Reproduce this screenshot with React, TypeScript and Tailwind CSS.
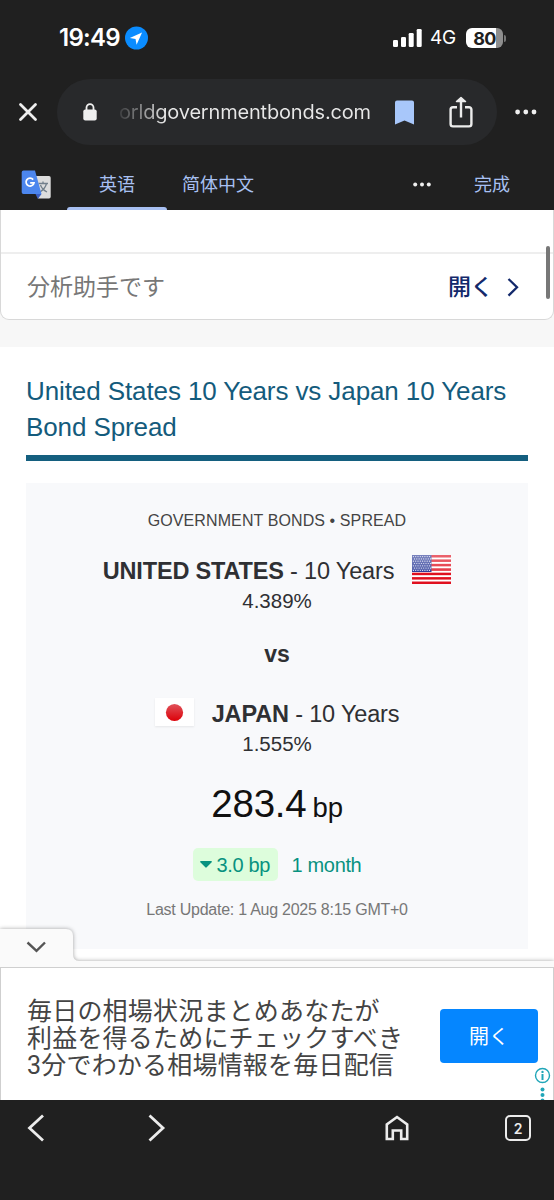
import React from "react";

const stripes = [0, 1, 2, 3, 4, 5, 6];
const starRows = [0, 1, 2, 3, 4, 5, 6];
const starCols = [0, 1, 2, 3, 4, 5, 6, 7];

const UsFlag = () => (
  <svg className="w-[39px] h-[29px] shrink-0" viewBox="0 0 39 29">
    <defs>
      <linearGradient id="usShine" x1="0" y1="0" x2="0" y2="1">
        <stop offset="0" stopColor="#fff" stopOpacity="0.35" />
        <stop offset="0.5" stopColor="#fff" stopOpacity="0.2" />
        <stop offset="0.55" stopColor="#fff" stopOpacity="0" />
      </linearGradient>
    </defs>
    <rect width="39" height="29" fill="#fff" />
    {stripes.map((i) => (
      <rect key={i} y={i * 4.42} width="39" height="2.5" fill="#e0101f" />
    ))}
    <rect width="19.5" height="17" fill="#2f3f9a" />
    {starRows.map((r) =>
      starCols.map((c) => (
        <circle
          key={`${r}-${c}`}
          cx={1.4 + c * 2.3 + (r % 2) * 1.1}
          cy={1.6 + r * 2.3}
          r="0.6"
          fill="#dfe2f3"
        />
      ))
    )}
    <rect width="39" height="29" fill="url(#usShine)" />
  </svg>
);

const JapanFlag = () => (
  <svg
    className="w-[39px] h-[28px] shrink-0 shadow-[0_1px_2px_rgba(0,0,0,0.08)]"
    viewBox="0 0 39 28"
  >
    <defs>
      <linearGradient id="jpSun" x1="0" y1="0" x2="0" y2="1">
        <stop offset="0" stopColor="#e0525a" />
        <stop offset="1" stopColor="#dc0008" />
      </linearGradient>
    </defs>
    <rect width="39" height="28" fill="#fff" />
    <circle cx="19.5" cy="14.5" r="8.6" fill="url(#jpSun)" />
  </svg>
);

const StatusBar = () => (
  <div className="flex h-[76px] items-center pl-[59px] pr-[48px] text-white">
    <span className="w-[63px] whitespace-nowrap text-[24px] font-semibold tracking-[-0.7px]">
      19:49
    </span>
    <svg className="ml-[3px] w-[23px] h-[24px]" viewBox="0 0 24 24">
      <circle cx="12" cy="12" r="12" fill="#0a8cff" />
      <path d="M17.8 6.2 5 11.9l6 1.1 1.1 6z" fill="#fff" />
    </svg>
    <div className="ml-auto flex items-center">
      <svg className="w-[29px] h-[18px]" viewBox="0 0 29 18" fill="#fff">
        <rect x="0" y="11" width="5" height="7" rx="1.3" />
        <rect x="8" y="8" width="5" height="10" rx="1.3" />
        <rect x="15.7" y="4" width="5" height="14" rx="1.3" />
        <rect x="23.7" y="0" width="5" height="18" rx="1.3" />
      </svg>
      <span className="ml-[8px] w-[30px] whitespace-nowrap text-[19px] tracking-[-0.3px]">
        4G
      </span>
      <div className="ml-[6px] flex h-[20px] w-[37px] items-center justify-center rounded-[6px] bg-linear-to-r from-white from-80% to-[#8e8e8e] to-80% text-[18px] font-bold tracking-[-0.6px] text-[#202020]">
        80
      </div>
      <div className="ml-px h-[7px] w-[2px] rounded-r-full bg-[#777777]"></div>
    </div>
  </div>
);

const AddressBar = () => (
  <div className="flex h-[72px] items-center">
    <svg
      className="ml-[18px] w-[20px] h-[20px]"
      viewBox="0 0 20 20"
      fill="none"
      stroke="#efefef"
      strokeWidth="2.8"
      strokeLinecap="round"
    >
      <path d="M2.5 2.5l15 15M17.5 2.5l-15 15" />
    </svg>
    <div className="ml-[19px] flex h-[66px] w-[440px] items-center rounded-full bg-[#28292b]">
      <svg className="ml-[26px] w-[14px] h-[18px]" viewBox="0 0 14 18">
        <rect x="0.3" y="6.5" width="13.4" height="11" rx="2" fill="#efefef" />
        <path
          d="M3.5 8V4.6a3.5 3.5 0 0 1 7 0V8"
          fill="none"
          stroke="#efefef"
          strokeWidth="1.8"
        />
      </svg>
      <span className="ml-[22px] w-[252px] whitespace-nowrap bg-linear-to-r from-[#3c3d3f] to-[#e8e8e8] to-[46px] bg-clip-text text-[20px] leading-[30px] tracking-[-0.18px] text-transparent">
        orldgovernmentbonds.com
      </span>
      <svg className="ml-[24px] w-[19px] h-[25px]" viewBox="0 0 19 25">
        <path
          d="M2 .5h15a2 2 0 0 1 2 2V24.5l-9.5-4-9.5 4V2.5a2 2 0 0 1 2-2z"
          fill="#a8c7fa"
        />
      </svg>
      <svg
        className="ml-[35px] w-[24px] h-[32px]"
        viewBox="0 0 24 32"
        fill="none"
        stroke="#ececec"
        strokeWidth="2.4"
      >
        <path d="M8 11.2H4a2.4 2.4 0 0 0-2.4 2.4V28A2.4 2.4 0 0 0 4 30.4h16a2.4 2.4 0 0 0 2.4-2.4V13.6a2.4 2.4 0 0 0-2.4-2.4h-4M12 21.5V4" />
        <path
          d="M7.5 5.5L12 1.5l4.5 4z"
          fill="#ececec"
          strokeWidth="1.5"
          strokeLinejoin="round"
        />
      </svg>
    </div>
    <svg className="ml-[18px] w-[22px] h-[6px]" viewBox="0 0 22 6" fill="#efefef">
      <circle cx="2.6" cy="3" r="2.4" />
      <circle cx="10.8" cy="3" r="2.4" />
      <circle cx="19" cy="3" r="2.4" />
    </svg>
  </div>
);

const TranslateBar = () => (
  <div className="flex h-[62px] items-center text-[18px] text-[#a8c0f2]">
    <svg className="ml-[21px] mt-[11px] w-[30px] h-[30px]" viewBox="0 0 30 30">
      <path
        d="M14 6h14a1.7 1.7 0 0 1 1.7 1.7v19a1.7 1.7 0 0 1-1.7 1.7H17z"
        fill="#dddddd"
      />
      <path
        d="M17.5 13.5h9.5M22 11.5v2M25.5 13.5c-.8 3.5-3.5 6.5-6.5 8.5M19.5 15c1 3 3.5 5.5 6.5 7"
        fill="none"
        stroke="#73808c"
        strokeWidth="1.3"
      />
      <path d="M14.5 24h6l-3.6 5z" fill="#3a5fc4" />
      <path
        d="M2.5.5h11.5l6.5 23.5h-18A1.8 1.8 0 0 1 .7 22.2v-20A1.8 1.8 0 0 1 2.5.5z"
        fill="#4c86ee"
      />
      <path
        d="M12.2 9.6a4 4 0 1 0 .8 3.2H9.2"
        fill="none"
        stroke="#fff"
        strokeWidth="1.7"
      />
    </svg>
    <div className="ml-[16px] flex h-full w-[100px] flex-col items-center">
      <span className="mt-[14px] h-[45px] leading-[46px]">英语</span>
      <div className="h-[3px] w-full shrink-0 rounded-t-[3px] bg-[#a8c0f2]"></div>
    </div>
    <span className="ml-[15px] mt-[11px]">简体中文</span>
    <svg
      className="ml-auto mt-[11px] w-[18px] h-[5px]"
      viewBox="0 0 18 5"
      fill="#efefef"
    >
      <circle cx="2.2" cy="2.5" r="2" />
      <circle cx="9" cy="2.5" r="2" />
      <circle cx="15.8" cy="2.5" r="2" />
    </svg>
    <span className="ml-[43px] mr-[44px] mt-[11px]">完成</span>
  </div>
);

const TopAd = () => (
  <div className="relative h-[137px] bg-[#f7f7f7]">
    <div className="h-[110px] rounded-b-[9px] border border-t-0 border-[#d8d8d8] bg-white">
      <div className="h-[44px] border-b-2 border-[#eeeeee]"></div>
      <div className="flex h-[65px] items-center pl-[26px] pr-[34px] pt-[2px]">
        <span className="text-[23px] text-[#777777]">分析助手です</span>
        <span className="ml-auto text-[23px] font-medium tracking-[-0.5px] text-[#13296b]">
          開く
        </span>
        <svg
          className="ml-[14px] w-[12px] h-[20px]"
          viewBox="0 0 12 20"
          fill="none"
          stroke="#13296b"
          strokeWidth="2.3"
        >
          <path d="M1.5 1l8.5 8.300-8.500 8.300" />
        </svg>
      </div>
    </div>
    <div className="absolute right-[4px] top-[36px] h-[53px] w-[4px] rounded-full bg-[#777777]"></div>
  </div>
);

const SpreadCard = () => (
  <div className="mt-[22px] flex h-[466px] flex-col items-center bg-[#f8f9fb] pt-[26px] text-[#2f3033]">
    <p className="h-[24px] whitespace-nowrap text-[16px] leading-[24px] tracking-[0.1px] text-[#444444]">
      GOVERNMENT BONDS • SPREAD
    </p>
    <div className="mt-[20px] flex h-[32px] items-center">
      <p className="whitespace-nowrap pt-[3px] text-[23.5px] leading-[32px] tracking-[-0.17px]">
        <b>UNITED STATES</b> - 10 Years
      </p>
      <div className="ml-[18px]">
        <UsFlag />
      </div>
    </div>
    <p className="mt-px h-[30px] text-[20.5px] leading-[30px]">4.389%</p>
    <p className="mt-[22px] h-[32px] text-[23px] font-bold leading-[32px]">vs</p>
    <div className="mt-[26px] flex h-[32px] items-center">
      <JapanFlag />
      <p className="ml-[18px] whitespace-nowrap pt-[3px] text-[23.5px] leading-[32px] tracking-[-0.17px]">
        <b>JAPAN</b> - 10 Years
      </p>
    </div>
    <p className="mt-px h-[30px] text-[20.5px] leading-[30px]">1.555%</p>
    <p className="mt-[20px] flex h-[50px] items-baseline whitespace-nowrap text-[38.5px] leading-[50px] tracking-[-0.2px] text-[#111111]">
      283.4
      <span className="ml-[6px] text-[27.5px]">bp</span>
    </p>
    <div className="mt-[19px] flex h-[33px] items-center text-[20px] tracking-[-0.35px] text-[#089280]">
      <div className="flex h-[33px] w-[85px] items-center rounded-[5px] bg-[#ddfddc] pl-[7px]">
        <svg className="w-[12px] h-[7px]" viewBox="0 0 12 7" fill="#089280">
          <path d="M.8 0h10.4a.7.7 0 0 1 .5 1.2L6.7 6.3a1 1 0 0 1-1.4 0L.3 1.2A.7.7 0 0 1 .8 0z" />
        </svg>
        <span className="ml-[5px] whitespace-nowrap">3.0 bp</span>
      </div>
      <span className="ml-[14px] whitespace-nowrap">1 month</span>
    </div>
    <p className="mt-[17px] whitespace-nowrap text-[16px] leading-[24px] tracking-[-0.25px] text-[#777777]">
      Last Update: 1 Aug 2025 8:15 GMT+0
    </p>
  </div>
);

const BottomAd = () => (
  <div className="absolute inset-x-0 bottom-0 h-[172px]">
    <svg
      className="block h-[39px] w-[554px] drop-shadow-[0_0_2px_rgba(0,0,0,0.35)]"
      viewBox="0 0 554 39"
    >
      <path d="M0 1h66q7 0 7 7v18q0 7 6 7h475v6H0z" fill="#fafafa" />
      <path
        d="M27.5 14.5l9 8.3 8.5-8.3"
        fill="none"
        stroke="#555555"
        strokeWidth="2.4"
      />
    </svg>
    <div className="relative flex h-[133px] border border-b-0 border-[#cfcfcf] bg-white">
      <p className="ml-[26px] mt-[30px] whitespace-nowrap font-['Roboto','Noto_Sans_CJK_JP',sans-serif] text-[25px] leading-[27px] tracking-[0.2px] text-[#444444]">
        毎日の相場状況まとめあなたが
        <br />
        利益を得るためにチェックすべき
        <br />
        3分でわかる相場情報を毎日配信
      </p>
      <button className="ml-auto mr-[15px] mt-[41px] flex h-[54px] w-[98px] items-center justify-center rounded-[4px] bg-[#0586ff] pt-[2px] text-[20px] text-white">
        開く
      </button>
      <svg
        className="absolute right-[2px] top-[99px] w-[17px] h-[33px]"
        viewBox="0 0 17 33"
      >
        <circle cx="8.5" cy="8.5" r="7" fill="none" stroke="#20a6b8" strokeWidth="1.4" />
        <g fill="#20a6b8">
          <circle cx="8.5" cy="4.9" r="1.2" />
          <path d="M7.5 7h2v6h-2z" />
          <circle cx="8.5" cy="22.5" r="2" />
          <circle cx="8.5" cy="28" r="2" />
          <circle cx="8.5" cy="33.5" r="2" />
        </g>
      </svg>
    </div>
  </div>
);

const BottomNav = () => (
  <div className="flex h-[100px] items-start bg-[#202020] pt-[14px]">
    <svg
      className="ml-[27px] w-[18px] h-[28px]"
      viewBox="0 0 18 28"
      fill="none"
      stroke="#ececec"
      strokeWidth="2.8"
    >
      <path d="M16 1.5L2.5 14 16 26.5" />
    </svg>
    <svg
      className="ml-[103px] w-[18px] h-[28px]"
      viewBox="0 0 18 28"
      fill="none"
      stroke="#ececec"
      strokeWidth="2.8"
    >
      <path d="M1.5 1.5L15 14 1.5 26.5" />
    </svg>
    <svg
      className="ml-[219px] mt-px w-[24px] h-[27px]"
      viewBox="0 0 24 27"
      fill="none"
      stroke="#ececec"
      strokeWidth="2.6"
    >
      <path d="M1.8 24V9.5L12 2l10.2 7.5V24h-6v-8.500H7.800V24z" />
    </svg>
    <div className="ml-[96px] mt-px flex h-[26px] w-[26px] items-center justify-center rounded-[5px] border-[2.4px] border-[#ececec] text-[14px] font-semibold text-[#ececec]">
      2
    </div>
  </div>
);

export default function App() {
  return (
    <div className="flex h-[1200px] w-[554px] flex-col overflow-hidden bg-white font-['Inter','Noto_Sans_CJK_SC',sans-serif]">
      <div className="h-[210px] bg-[#202020]">
        <StatusBar />
        <AddressBar />
        <TranslateBar />
      </div>
      <div
        lang="ja"
        className="relative h-[890px] overflow-hidden font-['Liberation_Sans','Noto_Sans_CJK_JP',sans-serif]"
      >
        <TopAd />
        <div className="px-[26px] pt-[26px]">
          <h1 className="whitespace-nowrap text-[26px] leading-[36px] tracking-[-0.1px] text-[#145b7c]">
            United States 10 Years vs Japan 10 Years
            <br />
            Bond Spread
          </h1>
          <div className="mt-[10px] h-[6px] bg-[#145f7f]"></div>
          <SpreadCard />
        </div>
        <BottomAd />
      </div>
      <BottomNav />
    </div>
  );
}
